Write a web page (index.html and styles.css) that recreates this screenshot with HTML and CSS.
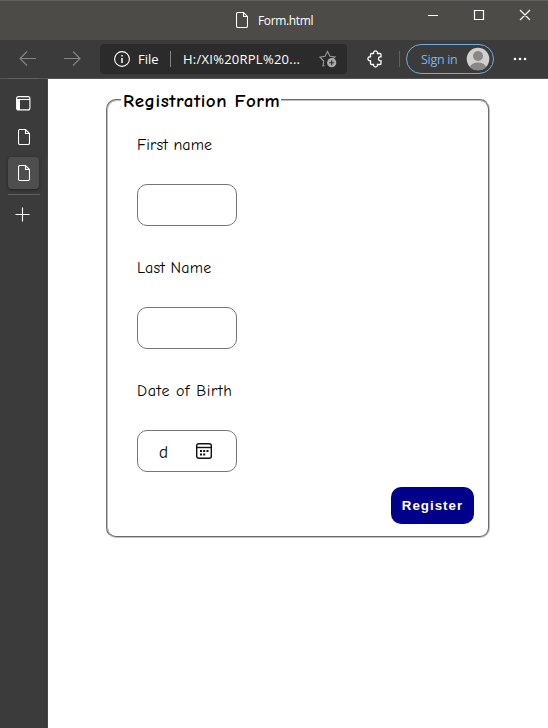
FILE: index.html
```html
<!DOCTYPE html>
<html lang="en">
<head>
<meta charset="utf-8">
<title>Form.html</title>
<link rel="stylesheet" href="styles.css">
</head>
<body>
<div class="window">
  <header class="titlebar">
    <div class="tab-title">
      <svg width="12" height="16" viewBox="0 0 12 16"><path d="M2 .5h5.500l4 4V14q0 1.500-1.500 1.500H2Q.5 15.500.5 14V2Q.5.5 2 .5zM7.500.5v4h4"/></svg>
      <span class="title-text">Form.html</span>
    </div>
    <svg class="controls" width="104" height="12" viewBox="0 0 104 12"><path d="M0 6.500h10M46.500 1.500h9v9h-9zM92 1l10 10M102 1L92 11"/></svg>
  </header>
  <div class="toolbar">
    <svg class="arrows" width="62" height="16" viewBox="0 0 62 16"><path d="M17 7.500H1M8 .5L1 7.500 8 14.500M45 7.500h16M54 .5L61 7.500 54 14.500"/></svg>
    <div class="address">
      <svg width="16" height="16" viewBox="0 0 16 16"><circle cx="8" cy="8" r="7.400"/><path d="M8 7v5M8 4v1.500" stroke-width="1.500"/></svg>
      <span class="file">File</span>
      <i class="rule"></i>
      <span class="url">H:/XI%20RPL%20...</span>
      <svg class="star" width="18" height="18" viewBox="0 0 18 18"><path d="M5.500 15.500l-1.500.5.700-5L1 7.200 6 6.300 8.500 1.500 11 6.300l5 .7-2 2"/><circle cx="12.700" cy="12.700" r="4.600" class="badge"/><path class="plus" d="M10.200 12.700h5M12.700 10.200v5"/></svg>
    </div>
    <svg class="puzzle" width="16" height="18" viewBox="0 0 16 18"><path d="M4.500 3.500h2c-.4-3.400 4.400-3.400 4 0H13q1 0 1 1v2.300c-3.400-.4-3.400 4.400 0 4V13.500q0 1-1 1h-2.500c.4 3.300-4.400 3.300-4 0h-2q-1 0-1-1v-2.700C0 11.200 0 6.400 3.500 6.800V4.500q0-1 1-1z"/></svg>
    <i class="rule dim"></i>
    <div class="signin">
      <span class="signin-text">Sign in</span>
      <svg width="24" height="24" viewBox="0 0 24 24"><defs><clipPath id="disc"><circle cx="12" cy="12" r="11.300"/></clipPath></defs><g clip-path="url(#disc)"><path class="disc" d="M0 0h24v24H0z"/><circle class="person" cx="12" cy="9" r="5"/><ellipse class="person" cx="12" cy="20.500" rx="8" ry="5"/></g></svg>
    </div>
    <svg class="more" width="14" height="4" viewBox="0 0 14 4"><circle cx="2" cy="2" r="1.300"/><circle cx="7" cy="2" r="1.300"/><circle cx="12" cy="2" r="1.300"/></svg>
  </div>
  <div class="body">
    <nav class="sidebar">
      <div class="cell first"><svg width="15" height="15" viewBox="0 0 15 15"><rect x=".6" y=".6" width="13.300" height="13.300" rx="2"/><path d="M1 3.500h13"/><path class="solid" d="M1 4h3v10H2l-1-1z"/></svg></div>
      <div class="cell"><svg width="12" height="16" viewBox="0 0 12 16"><path d="M2 .5h5.500l4 4V14q0 1.500-1.500 1.500H2Q.5 15.500.5 14V2Q.5.5 2 .5zM7.500.5v4h4"/></svg></div>
      <div class="cell active"><svg width="12" height="16" viewBox="0 0 12 16"><path d="M2 .5h5.500l4 4V14q0 1.500-1.500 1.500H2Q.5 15.500.5 14V2Q.5.5 2 .5zM7.500.5v4h4"/></svg></div>
      <div class="add"><svg width="15" height="15" viewBox="0 0 15 15"><path d="M.5 7.500h14M7.500.5v14"/></svg></div>
    </nav>
    <main class="page">
      <fieldset class="form">
        <legend class="legend"><span class="legend-text">Registration Form</span></legend>
        <label class="field"><span class="label first-name">First name</span><input class="box" type="text"></label>
        <label class="field"><span class="label last-name">Last Name</span><input class="box" type="text"></label>
        <div class="field"><span class="label birth">Date of Birth</span>
          <div class="box date"><span>d</span><svg width="16" height="16" viewBox="0 0 16 16"><rect x=".7" y=".7" width="14.600" height="14.600" rx="2"/><path d="M1 4.500h14"/><path class="dots" d="M4 7h2v2H4zM7.200 7h2v2h-2zM10.500 7h2v2h-2zM4 10.500h2v2H4zM7.200 10.500h2v2h-2z"/></svg></div>
        </div>
        <button class="register" type="button">Register</button>
      </fieldset>
    </main>
  </div>
</div>
</body>
</html>
```
FILE: styles.css
```css
* { box-sizing: border-box; }
body { margin: 0; background: #fff; }
svg { display: block; flex: none; fill: none; stroke: #fff; stroke-width: 1.1; }
.window { width: 548px; height: 728px; display: flex; flex-direction: column; overflow: hidden; font-family: "Segoe UI", "Open Sans", sans-serif; color: #fff; }
.titlebar { height: 40px; flex: none; display: flex; background: #4c4b48; border-top: 1px solid #5f5f5d; }
.tab-title { width: 192px; margin-left: 236px; padding-top: 11px; display: flex; gap: 10px; }
.title-text { font-size: 12px; line-height: 18px; letter-spacing: -.35px; }
.controls { margin-top: 8px; stroke-width: 1.2; }
.toolbar { height: 39px; flex: none; display: flex; align-items: center; background: #3b3b3b; border-bottom: 1px solid #555; }
.arrows { margin-left: 19px; stroke: #858585; width: 62px; }
.address { width: 247px; height: 30px; margin-left: 19px; padding-left: 14px; background: #2b2b2b; border-radius: 4px; display: flex; align-items: center; }
.file { width: 23px; margin-left: 8px; font-size: 13px; white-space: nowrap; }
.rule { width: 1px; height: 16px; margin-left: 9px; background: #858585; flex: none; }
.url { width: 118px; margin-left: 12px; font-size: 13px; letter-spacing: .25px; white-space: nowrap; }
.star { margin-left: 18px; stroke: #999; }
.badge { fill: #aaa; stroke: none; }
.plus { stroke: #2b2b2b; }
.puzzle { margin-left: 20px; stroke-width: 1.3; }
.dim { margin-left: 16px; background: #606060; }
.signin { width: 88px; height: 30px; margin-left: 6px; padding: 0 3px 0 14px; border: 1px solid #70aee0; border-radius: 15px; display: flex; align-items: center; justify-content: space-between; color: #78b6e8; }
.signin-text { font-size: 12.5px; letter-spacing: -.3px; white-space: nowrap; }
.disc { fill: #d2d0ce; stroke: none; }
.person { fill: #8a8886; stroke: none; }
.more { margin-left: 19px; fill: #fff; stroke: none; }
.body { flex: 1; display: flex; }
.sidebar { width: 48px; background: #3b3b3b; border-right: 1px solid #484848; padding: 0 8px; }
.cell { width: 31px; height: 32px; margin-bottom: 4px; display: flex; align-items: center; justify-content: center; }
.cell.first { height: 38px; padding-top: 12px; margin-top: -1px; margin-bottom: 5px; border-top: 1px solid #606060; }
.active { background: #4e4e4e; border-radius: 4px; box-shadow: 0 1px 3px #222; margin-bottom: 5px; }
.solid { fill: #fff; stroke: none; }
.add { width: 32px; height: 42px; border-top: 1px solid #606060; padding: 12px 0 0 7px; }
.page { flex: 1; padding: 9px 0 0 58px; background: #fff; color: #000; font-family: "Comic Sans MS", "Comic Neue", "Open Sans", sans-serif; }
.form { width: 384px; height: 450px; margin: 0; padding: 21px 14px 12px 29px; border: 2px groove #c0c0c0; border-radius: 10px; }
.legend { width: 160px; height: 24px; margin-left: -16px; padding: 0 0 0 2px; font-size: 19px; line-height: 26px; font-weight: bold; white-space: nowrap; }
.legend-text { letter-spacing: .55px; }
.field { display: flex; flex-direction: column; gap: 27px; margin-bottom: 30px; }
.label { height: 24px; font-size: 16px; line-height: 25px; }
.first-name { letter-spacing: .1px; }
.last-name { letter-spacing: .2px; }
.birth { letter-spacing: .65px; }
.box { width: 100px; height: 42px; border: 1px solid #767676; border-radius: 10px; background: #fff; }
.date { padding: 0 24px 0 21px; display: flex; align-items: center; justify-content: space-between; font-size: 17px; line-height: 22px; }
.date span { padding-top: 3px; }
.date svg { stroke: #111; stroke-width: 1.4; }
.dots { fill: #111; stroke: none; }
.register { display: block; width: 83px; height: 37px; margin: -15px 0 0 auto; padding: 0; border: 0; border-radius: 10px; background: #00008b; color: #fff; font: bold 13.33px "Liberation Sans", Arial, sans-serif; letter-spacing: 1px; }
```
